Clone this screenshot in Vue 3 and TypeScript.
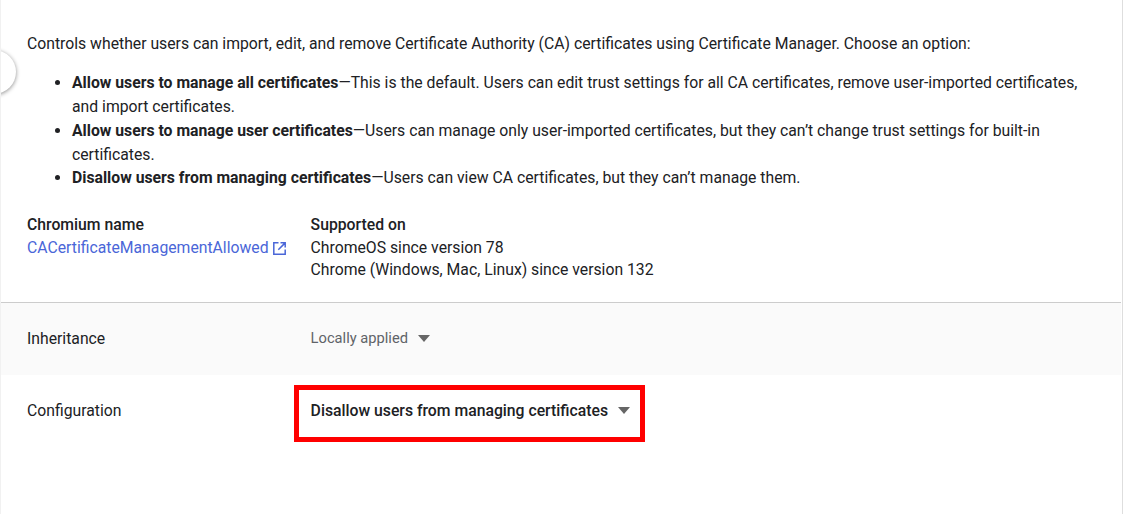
<script setup lang="ts">
const items = [
  { b: 'Allow users to manage all certificates', t: '—This is the default. Users can edit trust settings for all CA certificates, remove user-imported certificates, and import certificates.' },
  { b: 'Allow users to manage user certificates', t: '—Users can manage only user-imported certificates, but they can’t change trust settings for built-in certificates.' },
  { b: 'Disallow users from managing certificates', t: '—Users can view CA certificates, but they can’t manage them.' },
]
</script>

<template>
  <div class="page">
    <div class="handle"></div>
    <div class="intro">
      <p class="lead">Controls whether users can import, edit, and remove Certificate Authority (CA) certificates using Certificate Manager. Choose an option:</p>
      <ul class="list">
        <li v-for="i in items" :key="i.b"><b>{{ i.b }}</b>{{ i.t }}</li>
      </ul>
      <div class="meta">
        <div class="col-name">
          <div class="label">Chromium name</div>
          <a class="link">CACertificateManagementAllowed<svg class="ext" width="15" height="15" viewBox="0 0 15 15" fill="none"><path d="M6.5 1.8H1.8v11.4h11.4V8.5M8.5 1.8h4.7v4.7M12.9 2.1 6.3 8.7" stroke="#4a66d8" stroke-width="1.5"/></svg></a>
        </div>
        <div>
          <div class="label">Supported on</div>
          <div>ChromeOS since version 78</div>
          <div>Chrome (Windows, Mac, Linux) since version 132</div>
        </div>
      </div>
    </div>
    <div class="row inherit">
      <div class="name">Inheritance</div>
      <div class="value muted">Locally applied<span class="caret"></span></div>
    </div>
    <div class="row config">
      <div class="name">Configuration</div>
      <div class="value strong">
        <div class="highlight">Disallow users from managing certificates<span class="caret"></span></div>
      </div>
    </div>
  </div>
</template>

<style>
html, body { margin: 0; background: #fff; overflow: hidden; }
</style>

<style scoped>
.page {
  position: relative;
  box-sizing: border-box;
  width: 1123px;
  height: 514px;
  overflow: hidden;
  padding-right: 1px;
  border-left: 1px solid #f1f1f1;
  border-right: 1px solid #dedede;
  font-family: Roboto, sans-serif;
  font-size: 15.75px;
  line-height: 23.75px;
  color: #202124;
}
.handle {
  position: absolute;
  left: -29px;
  top: 50px;
  width: 44px;
  height: 44px;
  border-radius: 50%;
  background: #fff;
  box-shadow: 0 1px 4px rgba(0, 0, 0, 0.45);
}
.intro { padding: 32px 26px 0; height: 303px; box-sizing: border-box; border-bottom: 1px solid #ccc; }
.lead { margin: 0; }
.list { margin: 15.6px 0 0; padding: 0 0 0 45px; }
.meta { display: flex; margin-top: 24.4px; line-height: 22.5px; }
.col-name { width: 283.6px; }
.label { font-weight: 500; }
.link { color: #4a66d8; display: inline-flex; align-items: center; gap: 3px; }
.row { display: flex; padding-left: 26px; }
.inherit { background: #fafafa; height: 72px; align-items: center; }
.config { padding-top: 10px; }
.name { width: 283.6px; }
.config .name { padding-top: 14px; }
.muted { color: #5f6368; display: flex; align-items: center; font-size: 14.7px; }
.strong { font-weight: 500; }
.highlight {
  box-sizing: border-box;
  width: 351px;
  height: 57px;
  margin-left: -17px;
  padding: 0 0 5px 12px;
  border: 5px solid #f00;
  display: flex;
  align-items: center;
}
.caret {
  width: 0;
  height: 0;
  margin-left: 10px;
  margin-top: -2px;
  border-left: 6px solid transparent;
  border-right: 6px solid transparent;
  border-top: 7px solid #666;
}
</style>
